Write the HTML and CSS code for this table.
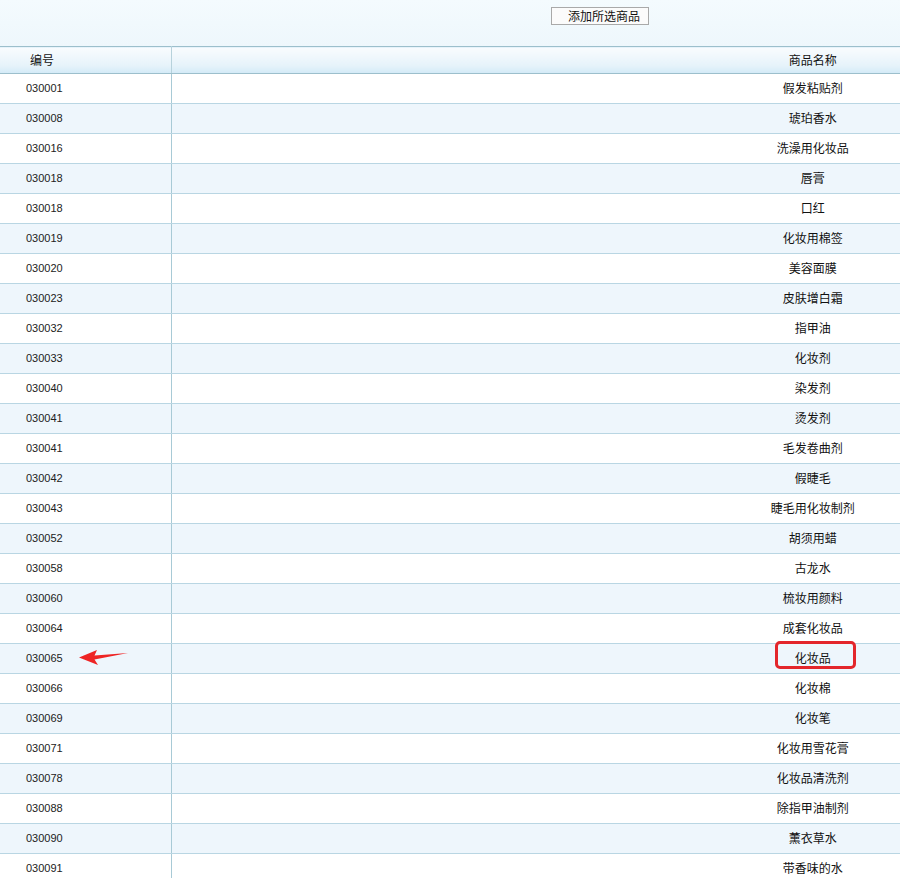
FILE: index.html
```html
<!DOCTYPE html>
<html lang="zh">
<head>
<meta charset="utf-8">
<title>商品列表</title>
<link rel="stylesheet" href="styles.css">
</head>
<body>
<div class="page">
  <div class="toolbar">
    <button class="btn" type="button">添加所选商品</button>
  </div>
  <div class="grid-wrap">
    <table class="grid">
      <thead>
        <tr><th class="c-code">编号</th><th class="c-name">商品名称</th></tr>
      </thead>
      <tbody>
        <tr><td class="c-code">030001</td><td class="c-name">假发粘贴剂</td></tr>
        <tr><td class="c-code">030008</td><td class="c-name">琥珀香水</td></tr>
        <tr><td class="c-code">030016</td><td class="c-name">洗澡用化妆品</td></tr>
        <tr><td class="c-code">030018</td><td class="c-name">唇膏</td></tr>
        <tr><td class="c-code">030018</td><td class="c-name">口红</td></tr>
        <tr><td class="c-code">030019</td><td class="c-name">化妆用棉签</td></tr>
        <tr><td class="c-code">030020</td><td class="c-name">美容面膜</td></tr>
        <tr><td class="c-code">030023</td><td class="c-name">皮肤增白霜</td></tr>
        <tr><td class="c-code">030032</td><td class="c-name">指甲油</td></tr>
        <tr><td class="c-code">030033</td><td class="c-name">化妆剂</td></tr>
        <tr><td class="c-code">030040</td><td class="c-name">染发剂</td></tr>
        <tr><td class="c-code">030041</td><td class="c-name">烫发剂</td></tr>
        <tr><td class="c-code">030041</td><td class="c-name">毛发卷曲剂</td></tr>
        <tr><td class="c-code">030042</td><td class="c-name">假睫毛</td></tr>
        <tr><td class="c-code">030043</td><td class="c-name">睫毛用化妆制剂</td></tr>
        <tr><td class="c-code">030052</td><td class="c-name">胡须用蜡</td></tr>
        <tr><td class="c-code">030058</td><td class="c-name">古龙水</td></tr>
        <tr><td class="c-code">030060</td><td class="c-name">梳妆用颜料</td></tr>
        <tr><td class="c-code">030064</td><td class="c-name">成套化妆品</td></tr>
        <tr><td class="c-code">030065</td><td class="c-name">化妆品</td></tr>
        <tr><td class="c-code">030066</td><td class="c-name">化妆棉</td></tr>
        <tr><td class="c-code">030069</td><td class="c-name">化妆笔</td></tr>
        <tr><td class="c-code">030071</td><td class="c-name">化妆用雪花膏</td></tr>
        <tr><td class="c-code">030078</td><td class="c-name">化妆品清洗剂</td></tr>
        <tr><td class="c-code">030088</td><td class="c-name">除指甲油制剂</td></tr>
        <tr><td class="c-code">030090</td><td class="c-name">薰衣草水</td></tr>
        <tr><td class="c-code">030091</td><td class="c-name">带香味的水</td></tr>
      </tbody>
    </table>
    <svg class="mark-arrow" width="52" height="18" viewBox="0 0 52 18" aria-hidden="true">
      <polygon points="1,9.5 19,2 16.5,7.5 50,5 16.5,11.5 20,17" fill="#ee2424"/>
    </svg>
    <div class="mark-box"></div>
  </div>
</div>
</body>
</html>
```
FILE: styles.css
```css
html, body {
  margin: 0;
  padding: 0;
  background: #ffffff;
}
body {
  font-family: "Liberation Sans", "Noto Sans CJK SC", sans-serif;
  color: #222;
  overflow: hidden;
}
.page {
  width: 900px;
  overflow: hidden;
}
.toolbar {
  height: 46px;
  box-sizing: border-box;
  padding: 7px 0 0 551px;
  background: linear-gradient(#f4fbfe, #eef7fc);
}
.btn {
  display: block;
  width: 98px;
  height: 18px;
  padding: 0 0 0 16px;
  margin: 0;
  border: 1px solid #a9a9a9;
  background: #fbfbfb;
  font-family: "Noto Sans CJK SC", sans-serif;
  font-size: 12px;
  line-height: 16px;
  color: #111;
  text-align: left;
  box-sizing: border-box;
}
.grid-wrap {
  position: relative;
  width: 900px;
  overflow: hidden;
}
.grid {
  width: 1454px;
  border-collapse: collapse;
  table-layout: fixed;
}
.grid th {
  height: 25px;
  padding: 0 0 1px;
  font-family: "Noto Sans CJK SC", sans-serif;
  font-weight: normal;
  font-size: 12px;
  line-height: 16px;
  color: #111;
  background: linear-gradient(#f9fcfe, #e6f3fa 70%, #d3eaf7);
  border-top: 1px solid #9cbfcc;
  border-bottom: 1px solid #9cbfcc;
}
.grid th.c-code {
  width: 171px;
  text-align: left;
  padding-left: 30px;
  box-sizing: border-box;
  border-right: 1px solid #b7d2dc;
}
.grid td {
  height: 28px;
  padding: 0 0 1px;
  line-height: 16px;
  border-bottom: 1px solid #b9d6e3;
}
.grid td.c-code {
  padding-left: 26px;
  font-size: 11px;
  color: #222;
  border-right: 1px solid #a8cad6;
}
.grid td.c-name,
.grid th.c-name {
  text-align: center;
  font-family: "Noto Sans CJK SC", sans-serif;
  font-size: 12px;
  color: #111;
}
.grid tbody tr:nth-child(even) td {
  background: #eef6fc;
}
.mark-arrow {
  position: absolute;
  left: 78px;
  top: 602px;
}
.mark-box {
  position: absolute;
  left: 775px;
  top: 595px;
  width: 81px;
  height: 28px;
  box-sizing: border-box;
  border: 3px solid #e3262b;
  border-radius: 5px;
}
```
